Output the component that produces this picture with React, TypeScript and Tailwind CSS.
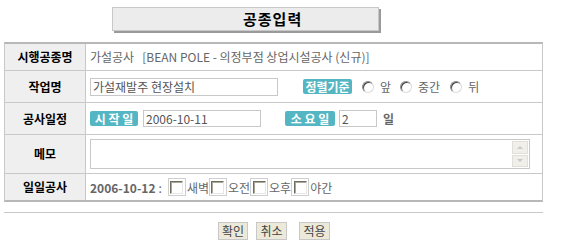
import React from "react";

const font = { fontFamily: '"Noto Sans CJK KR", "Noto Sans", sans-serif' };

function Badge({ children, w }: { children: React.ReactNode; w: string }) {
  return (
    <span
      className={`inline-flex items-center justify-center h-[15px] ${w} rounded-[2px] bg-[#55b6c3] text-white text-[12px] font-bold leading-none tracking-[0px]`}
    >
      {children}
    </span>
  );
}

function Radio() {
  return (
    <span className="inline-block w-[12px] h-[12px] rounded-full border border-[#8a8a8a] border-r-[#dcdcdc] border-b-[#dcdcdc] bg-white shadow-[inset_1px_1px_0_#444]" />
  );
}

function Check() {
  return (
    <span className="inline-flex items-center justify-center w-[18px] h-[18px] border border-[#cfcfcf] bg-white">
      <span className="block w-[13px] h-[13px] border border-t-[#6e6e60] border-l-[#6e6e60] border-r-[#e6e6e6] border-b-[#e6e6e6] bg-white shadow-[inset_1px_1px_0_#aca899]" />
    </span>
  );
}

function Row({ label, h, children, last }: { label: string; h: string; children: React.ReactNode; last?: boolean }) {
  return (
    <div className={`flex ${h} ${last ? "" : "border-b border-[#c8c8c8]"}`}>
      <div className="w-[81px] shrink-0 bg-[#efefef] border-r border-[#c8c8c8] flex items-center justify-center text-[12px] font-bold text-black">
        {label}
      </div>
      <div className="flex-1 flex items-center pl-[4px] text-[12px] text-[#666]">{children}</div>
    </div>
  );
}

export default function App() {
  return (
    <div className="w-[564px] h-[246px] bg-white overflow-hidden" style={font}>
      <div className="pt-[7px] pl-[112px]">
        <div className="w-[267px] h-[24px] bg-[#ececec] border border-[#c8c8c8] shadow-[2px_2px_0_#9a9a9a] flex items-center pl-[130px] text-[15px] font-bold text-black tracking-[1px]">
          공종입력
        </div>
      </div>
      <div className="mt-[11px] ml-[4px] w-[539px] border-x border-[#c8c8c8] border-t-2 border-t-[#b8b8b8] border-b-2 border-b-[#b8b8b8]">
        <Row label="시행공종명" h="h-[27px]">
          <span className="whitespace-pre">가설공사   [BEAN POLE - 의정부점 상업시설공사 (신규)]</span>
        </Row>
        <Row label="작업명" h="h-[32px]">
          <div className="w-[188px] h-[18px] border border-[#c8c8c8] flex items-center px-[2px] text-[12px] text-[#555]">
            가설재발주 현장설치
          </div>
          <span className="ml-[25px]">
            <Badge w="w-[49px]">정렬기준</Badge>
          </span>
          <span className="ml-[10px] flex items-center">
            <Radio />
          </span>
          <span className="ml-[6px]">앞</span>
          <span className="ml-[9px] flex items-center">
            <Radio />
          </span>
          <span className="ml-[6px]">중간</span>
          <span className="ml-[10px] flex items-center">
            <Radio />
          </span>
          <span className="ml-[6px]">뒤</span>
        </Row>
        <Row label="공사일정" h="h-[32px]">
          <Badge w="w-[48px]">시 작 일</Badge>
          <div className="ml-[5px] w-[118px] h-[17px] border border-[#c8c8c8] flex items-center px-[2px] text-[12px] text-[#555]">
            2006-10-11
          </div>
          <span className="ml-[24px]">
            <Badge w="w-[50px]">소 요 일</Badge>
          </span>
          <div className="ml-[4px] w-[38px] h-[17px] border border-[#c8c8c8] flex items-center px-[2px] text-[12px] text-[#555]">
            2
          </div>
          <span className="ml-[6px] font-bold text-[#666]">일</span>
        </Row>
        <Row label="메모" h="h-[39px]">
          <div className="w-[440px] h-[30px] border border-[#c8c8c8] bg-white flex justify-end p-[1px]">
            <div className="w-[16px] flex flex-col gap-[1px]">
              <div className="h-[13px] bg-[#f0efe9] border border-[#e0dfd8] flex items-center justify-center">
                <span className="block w-0 h-0 border-x-[3px] border-x-transparent border-b-[3px] border-b-[#c8c8c8]" />
              </div>
              <div className="h-[13px] bg-[#f0efe9] border border-[#e0dfd8] flex items-center justify-center">
                <span className="block w-0 h-0 border-x-[3px] border-x-transparent border-t-[3px] border-t-[#c8c8c8]" />
              </div>
            </div>
          </div>
        </Row>
        <Row label="일일공사" h="h-[26px]" last>
          <span className="font-bold text-[#666] mt-[2px]">2006-10-12</span>
          <span className="ml-[3px] mr-[6px] mt-[2px]">:</span>
          <Check />
          <span className="ml-[1px] mt-[2px]">새벽</span>
          <Check />
          <span className="ml-[1px] mt-[2px]">오전</span>
          <Check />
          <span className="ml-[1px] mt-[2px]">오후</span>
          <Check />
          <span className="ml-[1px] mt-[2px]">야간</span>
        </Row>
      </div>
      <div className="mt-[10px] ml-[4px] w-[539px] h-px bg-[#c8c8c8]" />
      <div className="mt-[9px] flex pl-[218px] gap-[8px] text-[12px] text-[#444]">
        <div className="w-[30px] h-[18px] bg-[#ece9d8] border border-[#c8c8c8] flex items-center justify-center">확인</div>
        <div className="w-[31px] h-[18px] bg-[#ece9d8] border border-[#c8c8c8] flex items-center justify-center">취소</div>
        <div className="ml-[4px] w-[31px] h-[18px] bg-[#ece9d8] border border-[#c8c8c8] flex items-center justify-center">적용</div>
      </div>
    </div>
  );
}
